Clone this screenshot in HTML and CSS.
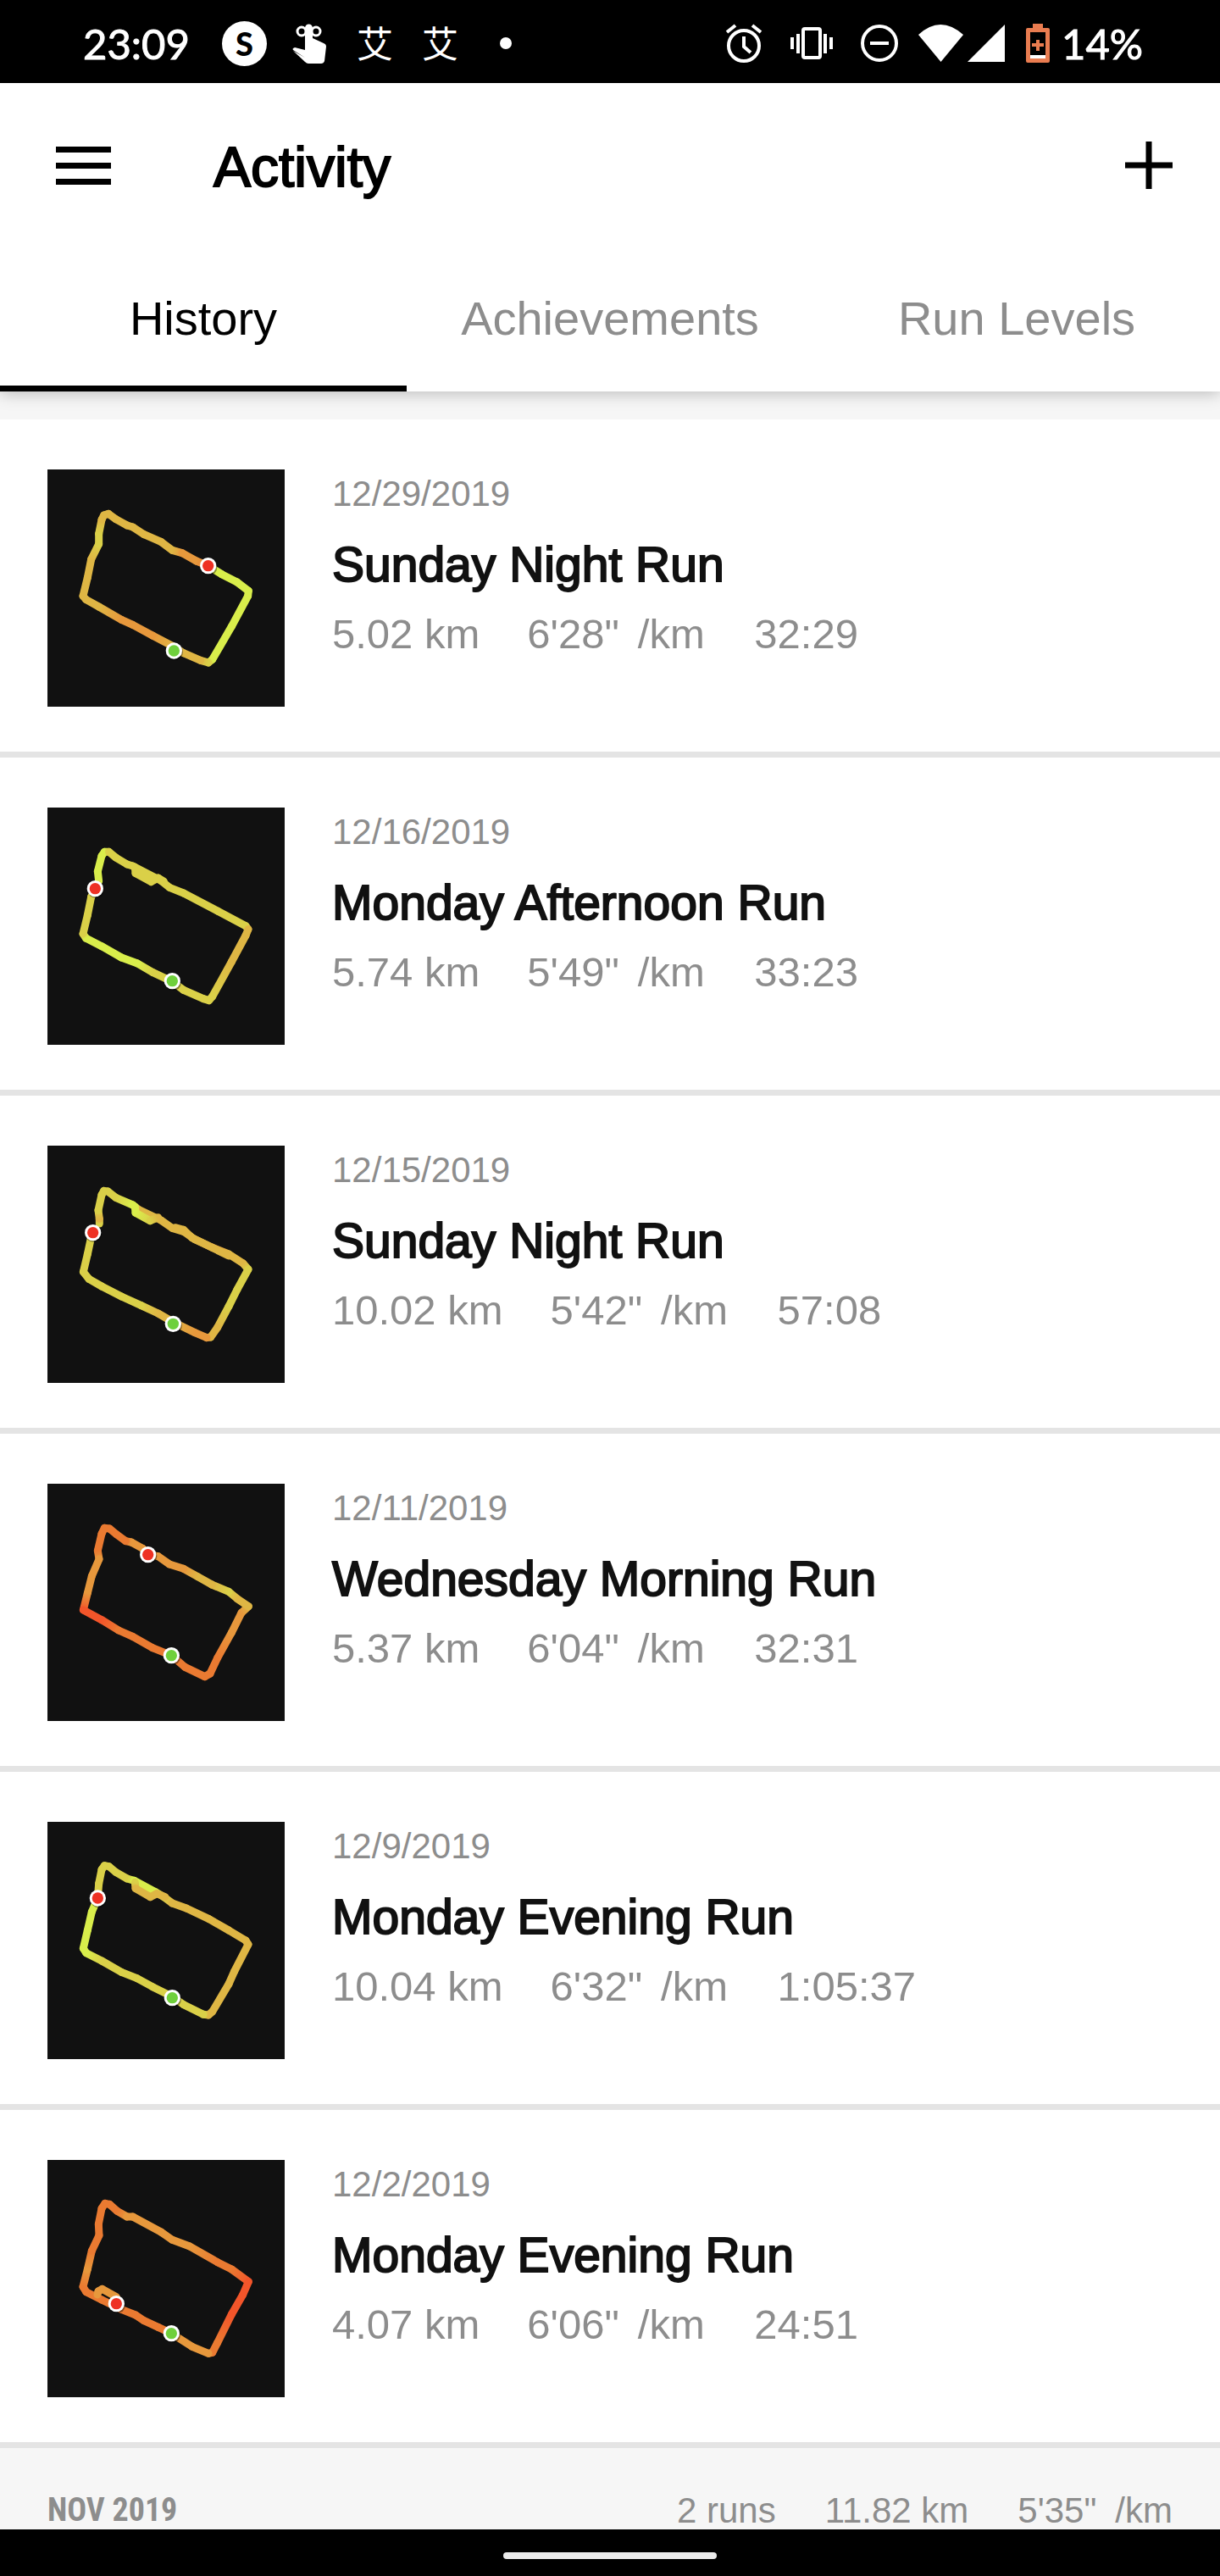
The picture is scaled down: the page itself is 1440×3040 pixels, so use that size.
FILE: index.html
```html
<!DOCTYPE html>
<html lang="en">
<head>
    <meta charset="UTF-8">
    <meta name="viewport" content="width=device-width, initial-scale=1.0">
    <title>Activity</title>
    <link rel="stylesheet" href="styles.css">
</head>
<body>

    <div class="status-bar">
        <span class="clock">23:09</span>
        <div class="notifications">
            <span><span class="badge-s">S</span></span>
            <span>
                <svg width="42" height="50" viewBox="0 0 42 50" fill="#fff">
                    <path d="M15 42 1 33q-1-1 0-2l2-1 12 3V7a4 4 0 0 1 9 0v12l13 6q3 1 3 4l-2 17q-1 3-4 3H19q-2 0-4-2L1 34z"/>
                    <circle cx="11" cy="11" r="5" fill="none" stroke="#fff" stroke-width="3"/>
                    <circle cx="28" cy="11" r="5" fill="none" stroke="#fff" stroke-width="3"/>
                </svg>
            </span>
            <span class="cjk">艾</span>
            <span class="cjk">艾</span>
            <span><span class="dot"></span></span>
        </div>

        <div class="system">
            <span>
                <svg width="44" height="46" viewBox="0 0 44 46" fill="none" stroke="#fff" stroke-width="4">
                    <circle cx="22" cy="26" r="18"/>
                    <path d="M22 15v12l8 7M2 10l10-8M42 10l-10-8"/>
                </svg>
            </span>
            <span>
                <svg width="50" height="38" viewBox="0 0 50 38" fill="none" stroke="#fff" stroke-width="4">
                    <rect x="15" y="2" width="20" height="34" rx="2"/>
                    <path d="M9 8v23M2 12v14M41 8v23M48 12v14"/>
                </svg>
            </span>
            <span>
                <svg width="44" height="46" viewBox="0 0 44 46" fill="none" stroke="#fff" stroke-width="4">
                    <circle cx="22" cy="23" r="20"/>
                    <path d="M11 23h22"/>
                </svg>
            </span>
        </div>
        <svg class="wifi" width="53" height="44" viewBox="0 0 53 44" fill="#fff">
            <path d="M0 12Q26-12 53 12L26.500 44z"/>
        </svg>
        <svg class="signal" width="44" height="44" viewBox="0 0 44 44" fill="#fff">
            <path d="M44 0v44H0z"/>
        </svg>
        <svg class="battery" width="28" height="46" viewBox="0 0 28 46">
            <path fill="#e97c50" d="M8 0h12v5h6q2 0 2 2v37q0 2-2 2H2q-2 0-2-2V7q0-2 2-2h6z"/>
            <path fill="#000" d="M5 10h18v27H5z"/>
            <path fill="#fff" d="M5 37h18v4H5z"/>
            <path fill="#e97c50" d="M12 19h4v4h5v4h-5v5h-4v-5H7v-4h5z"/>
        </svg>
        <span class="charge">14%</span>
    </div>

    <header class="top">
        <div class="toolbar">
            <button class="menu-btn" aria-label="Menu"><span></span><span></span><span></span></button>
            <h1>Activity</h1>
            <button class="add-btn" aria-label="Add run">
                <svg width="56" height="56" viewBox="0 0 56 56" stroke="#000" stroke-width="7">
                    <path d="M28 0v56M0 28h56"/>
                </svg>
            </button>
        </div>
        <nav class="tabs">
            <a href="#history" class="active">History</a>
            <a href="#achievements">Achievements</a>
            <a href="#levels">Run Levels</a>
        </nav>
    </header>

    <main class="runs">
        <a class="run" href="#run1">
            <svg class="route" viewBox="48 42 840 840"></svg>
            <div class="info">
                <p class="date">12/29/2019</p>
                <h2>Sunday Night Run</h2>
                <p class="stats"><span>5.02 km</span><span class="pace">6'28"<span class="unit">/km</span></span><span>32:29</span></p>
            </div>
        </a>
        <a class="run" href="#run2">
            <svg class="route" viewBox="48 39 840 840"></svg>
            <div class="info">
                <p class="date">12/16/2019</p>
                <h2>Monday Afternoon Run</h2>
                <p class="stats"><span>5.74 km</span><span class="pace">5'49"<span class="unit">/km</span></span><span>33:23</span></p>
            </div>
        </a>
        <a class="run" href="#run3">
            <svg class="route" viewBox="48 36 840 840"></svg>
            <div class="info">
                <p class="date">12/15/2019</p>
                <h2>Sunday Night Run</h2>
                <p class="stats"><span>10.02 km</span><span class="pace">5'42"<span class="unit">/km</span></span><span>57:08</span></p>
            </div>
        </a>
        <a class="run" href="#run4">
            <svg class="route" viewBox="48 33 840 840"></svg>
            <div class="info">
                <p class="date">12/11/2019</p>
                <h2>Wednesday Morning Run</h2>
                <p class="stats"><span>5.37 km</span><span class="pace">6'04"<span class="unit">/km</span></span><span>32:31</span></p>
            </div>
        </a>
        <a class="run" href="#run5">
            <svg class="route" viewBox="48 36 840 840"></svg>
            <div class="info">
                <p class="date">12/9/2019</p>
                <h2>Monday Evening Run</h2>
                <p class="stats"><span>10.04 km</span><span class="pace">6'32"<span class="unit">/km</span></span><span>1:05:37</span></p>
            </div>
        </a>
        <a class="run" href="#run6">
            <svg class="route" viewBox="48 33 840 840"></svg>
            <div class="info">
                <p class="date">12/2/2019</p>
                <h2>Monday Evening Run</h2>
                <p class="stats"><span>4.07 km</span><span class="pace">6'06"<span class="unit">/km</span></span><span>24:51</span></p>
            </div>
        </a>
    </main>

    <section class="month">
        <h3>NOV 2019</h3>
        <p class="totals"><span>2 runs</span><span>11.82 km</span><span>5'35"<span class="unit">/km</span></span></p>
    </section>

    <div class="nav-bar"><span class="pill"></span></div>

    <script src="routes.js"></script>
</body>
</html>
```
FILE: styles.css
```css
* {
    box-sizing: border-box;
}
body {
    margin: 0;
    min-height: 100vh;
    display: flex;
    flex-direction: column;
    font-family: "Liberation Sans", Arial, sans-serif;
    background-color: #fff;
    color: #000;
}
h1, h2, h3, p {
    margin: 0;
    font-weight: normal;
}
a {
    color: inherit;
    text-decoration: none;
}
button {
    border: none;
    padding: 0;
    background: none;
    cursor: pointer;
}
svg {
    display: block;
}

/* status bar */
.status-bar {
    display: flex;
    align-items: center;
    height: 98px;
    padding: 4px 100px 0 98px;
    background-color: #000;
    color: #fff;
    font-family: Lato, sans-serif;
    font-size: 49px;
}
.clock, .charge {
    white-space: nowrap;
    -webkit-text-stroke: 1px #fff;
}
.clock {
    width: 152px;
}
.charge {
    width: 87px;
}
.notifications, .system {
    display: flex;
    align-items: center;
}
.notifications {
    flex: 1;
}
.notifications > span {
    display: flex;
    justify-content: center;
    width: 77px;
}
.system > span {
    display: flex;
    justify-content: center;
    width: 80px;
}
.cjk {
    font-family: "Noto Sans CJK SC", sans-serif;
    font-size: 43px;
    line-height: 50px;
    padding-bottom: 4px;
}
.badge-s {
    width: 53px;
    height: 53px;
    border-radius: 50%;
    background-color: #fff;
    color: #000;
    font-size: 38px;
    font-weight: 900;
    line-height: 53px;
    text-align: center;
}
.dot {
    width: 14px;
    height: 14px;
    border-radius: 50%;
    background-color: #fff;
}
.wifi {
    margin: 0 5px 0 6px;
}
.battery {
    margin: 0 14px 0 25px;
}

/* header */
.top {
    position: relative;
    background-color: #fff;
    box-shadow: 0 2px 18px rgba(0, 0, 0, 0.25);
}
.toolbar {
    display: flex;
    align-items: center;
    height: 194px;
    padding: 0 56px 0 66px;
}
.menu-btn {
    display: flex;
    flex-direction: column;
    gap: 12px;
    width: 65px;
    margin-right: 121px;
}
.menu-btn span {
    height: 7px;
    background-color: #000;
}
.toolbar h1 {
    flex: 1;
    padding-top: 3px;
    font-size: 66px;
    line-height: 72px;
    -webkit-text-stroke: 2px #000;
}
.tabs {
    display: flex;
}
.tabs a {
    flex: 1;
    height: 170px;
    border-bottom: 7px solid transparent;
    font-size: 56px;
    line-height: 168px;
    text-align: center;
    color: #8d8d8d;
}
.tabs .active {
    border-bottom-color: #000;
    color: #000;
}

/* history list */
.runs {
    border-top: 33px solid #f6f6f6;
}
.run {
    display: flex;
    gap: 56px;
    padding: 59px 56px 53px;
    border-bottom: 7px solid #e4e4e4;
}
.route {
    width: 280px;
    height: 280px;
    background-color: #111;
}
.date {
    font-size: 42px;
    line-height: 58px;
    color: #8d8d8d;
}
.run h2 {
    margin-top: 22px;
    font-size: 57px;
    line-height: 64px;
    color: #111;
    -webkit-text-stroke: 2px #111;
}
.stats {
    display: flex;
    gap: 56px;
    margin-top: 18px;
    font-size: 49px;
    line-height: 64px;
    color: #8d8d8d;
}
.pace {
    min-width: 212px;
}
.unit {
    margin-left: 22px;
}

/* next month */
.month {
    flex: 1;
    display: flex;
    justify-content: space-between;
    padding: 51px 56px 0;
    background-color: #f6f6f6;
    color: #8d8d8d;
}
.month h3 {
    font-family: "Roboto Condensed", "Open Sans Condensed", Roboto, sans-serif;
    font-size: 38px;
    font-weight: bold;
    line-height: 45px;
}
.totals {
    display: flex;
    gap: 58px;
    font-size: 42px;
    line-height: 45px;
}

.nav-bar {
    display: flex;
    align-items: center;
    justify-content: center;
    height: 56px;
    padding-top: 6px;
    background-color: #000;
}
.pill {
    width: 252px;
    height: 8px;
    border-radius: 4px;
    background-color: #ebebeb;
}
```
FILE: routes.js
```js
// pace colours, fast to slow
const pace = {
    l: '#d9ee4b',
    y: '#dad048',
    a: '#dfb644',
    o: '#e7983c',
    d: '#ea7a31',
    r: '#f3552a'
};

// each path is a list of "x,y,colour" points
const routes = [
    {
        paths: [
            '617,383,l 665,413,l 718,440,l 760,472,l 758,490,l 700,598,l 632,715,l 618,726,y 590,718,a 530,692,a 496,670,a 420,630,o 350,592,o 310,574,o 230,528,a 185,503,a 174,490,a 190,425,a 203,360,a 230,306,y 230,270,y 240,220,a 248,204,a 264,199,a 290,218,a 330,240,a 350,246,a 390,272,a 450,298,a 490,328,a 525,338,o 575,366,o 617,383,d'
        ],
        start: [496, 684],
        end: [617, 383]
    },
    {
        paths: [
            '230,300,l 226,265,l 240,210,l 250,196,l 266,196,y 290,216,y 330,240,y 350,246,y 450,298,y 480,322,y 530,342,y 650,405,y 750,458,y 759,470,a 750,492,a 700,585,a 632,708,y 620,722,y 600,716,y 530,685,y 490,655,y 420,622,y 365,590,l 310,570,l 240,530,l 185,502,l 174,486,y 190,420,y 203,355,y 218,326,y',
            '358,250,y 360,272,y 415,302,y 440,288,y 460,300,y',
            '365,258,y 410,280,y'
        ],
        start: [490, 653],
        end: [217, 326]
    },
    {
        paths: [
            '232,312,y 232,295,a 228,265,y 240,210,y 248,196,y 262,198,y 290,220,y 350,246,l 370,262,a 450,300,a 490,328,a 530,340,a 570,368,a 630,396,o 690,420,a 740,452,a 759,474,y 720,545,y 690,605,y 650,680,a 626,714,a 612,716,o 570,698,o 492,660,a 440,630,a 380,602,y 310,570,y 240,534,y 195,508,y 175,483,y 190,420,y 205,350,y',
            '358,252,l 360,274,l 412,302,y 440,290,a',
            '500,326,a 530,334,a 560,362,a 690,426,a'
        ],
        start: [493, 667],
        end: [209, 344]
    },
    {
        paths: [
            '404,284,o 385,262,o 345,240,o 325,236,d 292,212,d 268,192,d 250,190,d 240,210,d 226,270,d 231,300,o 205,360,o 190,420,o 175,480,r 240,515,r 300,552,d 350,574,d 420,614,d 487,641,d 535,682,d 605,716,d 624,705,d 650,650,d 700,560,o 735,490,o 760,467,a 720,440,a 690,415,y 630,390,a 580,362,a 530,334,o 480,318,o 440,290,o 404,284,o'
        ],
        start: [487, 641],
        end: [404, 284]
    },
    {
        paths: [
            '228,280,y 230,255,y 240,205,y 250,191,y 266,194,y 290,214,y 330,237,y 355,244,l 430,284,l 460,302,y 490,324,a 540,342,a 620,380,a 690,420,a 750,456,a 759,470,a 710,565,a 690,610,a 632,708,a 618,720,a 600,718,y 530,683,y 490,655,y 420,620,y 365,590,y 310,568,y 240,528,y 185,500,l 175,484,l 190,420,l 205,355,l 226,306,l',
            '358,250,y 360,272,a 412,302,a 435,290,a 465,302,a'
        ],
        start: [490, 659],
        end: [226, 306]
    },
    {
        paths: [
            '487,647,d 440,625,d 390,602,d 360,582,d 310,562,d 240,528,d 185,500,d 174,482,d 190,420,o 205,355,d 231,300,d 229,260,d 240,205,d 252,187,d 268,190,d 295,214,d 330,234,o 350,234,o 450,288,o 490,316,o 550,338,o 650,395,d 700,420,d 760,464,r 740,510,r 700,580,r 650,680,d 632,715,d 618,718,o 560,694,o 487,647,o',
            '225,510,o 228,498,o 242,490,o 292,518,o'
        ],
        start: [487, 647],
        end: [292, 542]
    }
];

const NS = 'http://www.w3.org/2000/svg';

function add(parent, tag, attrs) {
    const el = document.createElementNS(NS, tag);
    for (const key in attrs) {
        el.setAttribute(key, attrs[key]);
    }
    parent.appendChild(el);
    return el;
}

function drawSegment(svg, id, a, b) {
    const grad = add(svg, 'linearGradient', {
        id: id, gradientUnits: 'userSpaceOnUse', x1: a[0], y1: a[1], x2: b[0], y2: b[1]
    });
    add(grad, 'stop', { offset: 0, 'stop-color': pace[a[2]] });
    add(grad, 'stop', { offset: 1, 'stop-color': pace[b[2]] });
    add(svg, 'line', {
        x1: a[0], y1: a[1], x2: b[0], y2: b[1],
        stroke: `url(#${id})`, 'stroke-width': 27, 'stroke-linecap': 'round'
    });
}

function drawMarker(svg, pos, color) {
    add(svg, 'circle', { cx: pos[0] + 3, cy: pos[1] + 5, r: 29, fill: '#000', opacity: 0.4 });
    add(svg, 'circle', { cx: pos[0], cy: pos[1], r: 29, fill: '#fff' });
    add(svg, 'circle', { cx: pos[0], cy: pos[1], r: 20, fill: color });
}

document.querySelectorAll('.route').forEach((svg, i) => {
    routes[i].paths.forEach((path, j) => {
        const points = path.split(' ').map(p => p.split(',').map((v, n) => n < 2 ? Number(v) : v));
        for (let k = 1; k < points.length; k++) {
            drawSegment(svg, `seg-${i}-${j}-${k}`, points[k - 1], points[k]);
        }
    });
    drawMarker(svg, routes[i].start, '#6fd03c');
    drawMarker(svg, routes[i].end, '#ee3124');
});
```
